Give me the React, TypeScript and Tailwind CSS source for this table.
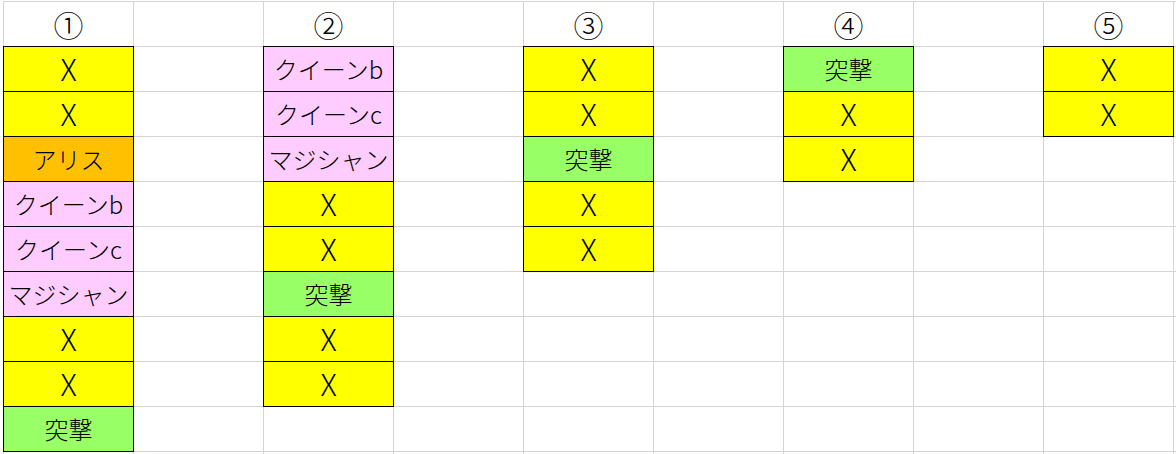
import React from 'react';

type Kind = 'x' | 'alice' | 'queen' | 'attack';

const fills: Record<Kind, string> = {
  x: 'bg-[#ffff00]',
  alice: 'bg-[#ffc000]',
  queen: 'bg-[#ffccff]',
  attack: 'bg-[#99ff66]',
};

const X = { label: 'X', kind: 'x' as Kind };
const ALICE = { label: 'アリス', kind: 'alice' as Kind };
const QB = { label: 'クイーンb', kind: 'queen' as Kind };
const QC = { label: 'クイーンc', kind: 'queen' as Kind };
const MAGI = { label: 'マジシャン', kind: 'queen' as Kind };
const ATK = { label: '突撃', kind: 'attack' as Kind };

type Item = { label: string; kind: Kind };

// column index -> header + stacked items
const stacks: Record<number, { head: string; items: Item[] }> = {
  0: { head: '①', items: [X, X, ALICE, QB, QC, MAGI, X, X, ATK] },
  2: { head: '②', items: [QB, QC, MAGI, X, X, ATK, X, X] },
  4: { head: '③', items: [X, X, ATK, X, X] },
  6: { head: '④', items: [ATK, X, X] },
  8: { head: '⑤', items: [X, X] },
};

const COLS = 10;
const ROWS = 10;

const font = { fontFamily: '"Noto Sans CJK JP", "Noto Sans", sans-serif' };

function Cell({ item }: { item?: Item }) {
  if (!item) {
    return <div className="h-[45px] border-r border-b border-[#d4d4d4]" />;
  }
  return (
    <div
      className={`-ml-px -mt-px flex items-center justify-center border border-black font-light leading-none text-black ${fills[item.kind]} ${
        item.kind === 'x' ? 'pb-[3px] text-[30px]' : 'text-[24px]'
      }`}
    >
      {item.label}
    </div>
  );
}

export default function App() {
  const cols = Array.from({ length: COLS }, (_, i) => i);
  const rows = Array.from({ length: ROWS }, (_, i) => i);

  return (
    <div className="h-[454px] w-[1176px] overflow-hidden bg-white" style={font}>
      <div className="ml-[3px] mt-px grid w-max grid-cols-[repeat(10,130px)] border-l border-t border-[#d4d4d4]">
        {cols.map((c) => (
          <div
            key={`h${c}`}
            className="flex h-[45px] items-center justify-center border-r border-b border-[#d4d4d4] text-[30px] font-light leading-none text-black"
          >
            {stacks[c]?.head ?? ''}
          </div>
        ))}
        {rows.map((r) =>
          cols.map((c) => <Cell key={`${r}-${c}`} item={stacks[c]?.items[r]} />)
        )}
      </div>
    </div>
  );
}
